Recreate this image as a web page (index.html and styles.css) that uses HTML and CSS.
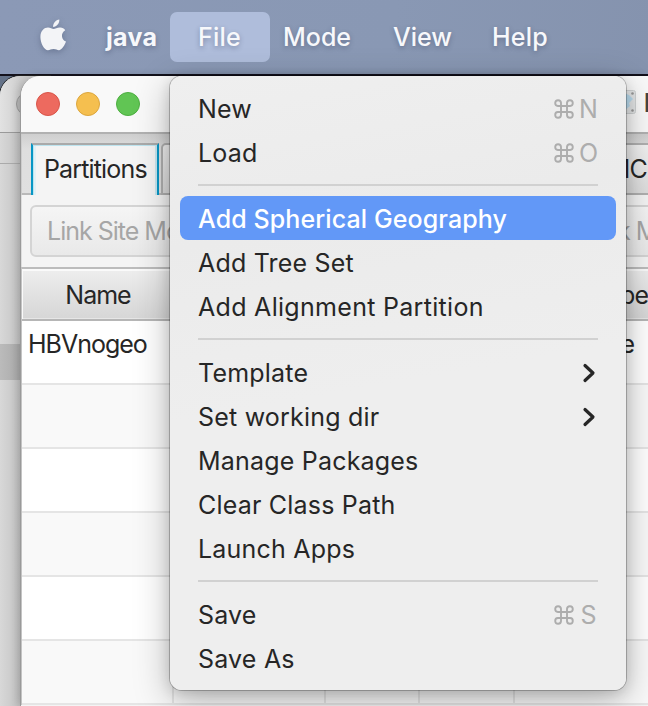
FILE: index.html
```html
<!DOCTYPE html>
<html lang="en">
<head>
<meta charset="utf-8">
<title>java</title>
<link rel="stylesheet" href="styles.css">
</head>
<body>
<svg class="defs" width="0" height="0"><defs>
  <symbol id="cmd" viewBox="0 0 20 20"><path d="M7 7H3.900A2.900 2.900 0 1 1 7 3.900V16.100A2.900 2.900 0 1 1 3.900 13H16.100A2.900 2.900 0 1 1 13 16.100V3.900A2.900 2.900 0 1 1 16.100 7Z" fill="none" stroke="currentColor" stroke-width="1.9"/></symbol>
  <symbol id="chev" viewBox="0 0 14 20"><path d="M3 2.500 11 10 3 17.500" fill="none" stroke="currentColor" stroke-width="3.2" stroke-linecap="round" stroke-linejoin="round"/></symbol>
</defs></svg>
<div class="desktop">
  <nav class="menubar">
    <svg class="apple" viewBox="0 0 26 32"><path d="M13.100 7.900C13 4.300 15.800 1 19.300.5 19.700 4.200 16.700 7.700 13.100 7.900ZM20.300 8.600C22.300 8.700 24.200 9.700 25.200 11.300 20.400 14.200 21.200 20.700 26 22.600 25 25.600 22.200 31 19.200 31.200 17 31.300 16.300 30 13.600 30 10.900 30 10 31.200 8 31.200 4.300 31.200.4 24.200.4 18 .4 11.800 4.300 8.600 8 8.600 10.400 8.600 12.100 10.100 13.600 10.100 15.100 10.100 17.400 8.400 20.300 8.600Z" fill="currentColor"/></svg>
    <span class="app">java</span>
    <span class="item file">File</span>
    <span class="item mode">Mode</span>
    <span class="item view">View</span>
    <span class="item help">Help</span>
  </nav>
  <main class="space">
    <aside class="backwin"><i class="backdot"></i><div class="backhead"></div><div class="backtabs"></div><div class="backbody"></div><div class="backrow"></div></aside>
    <section class="window">
      <header class="titlebar">
        <i class="light red"></i><i class="light yellow"></i><i class="light green"></i>
        <svg class="docicon" viewBox="0 0 24 24"><rect x=".5" y=".5" width="23" height="23" rx="2" fill="#e4e6e7" stroke="#cfd2d3"/><path d="M3 5 12 3 17 5 21 9 17 13 18 16 12 21 4 18Z" fill="#b9dbee"/><circle cx="20.500" cy="3.500" r="1.300" fill="#999"/><circle cx="20.500" cy="20.500" r="1.300" fill="#999"/></svg>
        <span class="wintitle">BEAUti</span>
      </header>
      <div class="tabs"><div class="tab active">Partitions</div><div class="tab mid"></div><div class="tab last">MCMC</div></div>
      <div class="toolbar"><div class="btn">Link Site Models</div><div class="btn right">Link Models</div></div>
      <div class="table">
        <div class="row head"><div>Name</div><div></div><div></div><div></div><div class="end">Data Type</div></div>
        <div class="row"><div>HBVnogeo</div><div></div><div></div><div></div><div class="end">nucleotide</div></div>
        <div class="row alt"><div></div><div></div><div></div><div></div><div></div></div>
        <div class="row"><div></div><div></div><div></div><div></div><div></div></div>
        <div class="row alt"><div></div><div></div><div></div><div></div><div></div></div>
        <div class="row"><div></div><div></div><div></div><div></div><div></div></div>
        <div class="row alt"><div></div><div></div><div></div><div></div><div></div></div>
      </div>
    </section>
    <div class="menu">
      <div class="mi"><span>New</span><span class="key"><svg><use href="#cmd"/></svg><b>N</b></span></div>
      <div class="mi"><span>Load</span><span class="key"><svg><use href="#cmd"/></svg><b>O</b></span></div>
      <hr>
      <div class="mi sel"><span>Add Spherical Geography</span></div>
      <div class="mi"><span>Add Tree Set</span></div>
      <div class="mi wide"><span>Add Alignment Partition</span></div>
      <hr>
      <div class="mi"><span>Template</span><svg class="chev"><use href="#chev"/></svg></div>
      <div class="mi"><span>Set working dir</span><svg class="chev"><use href="#chev"/></svg></div>
      <div class="mi"><span>Manage Packages</span></div>
      <div class="mi"><span>Clear Class Path</span></div>
      <div class="mi"><span>Launch Apps</span></div>
      <hr>
      <div class="mi"><span>Save</span><span class="key"><svg><use href="#cmd"/></svg><b>S</b></span></div>
      <div class="mi"><span>Save As</span></div>
    </div>
  </main>
</div>
</body>
</html>
```
FILE: styles.css
```css
* { box-sizing: border-box; }
body { margin: 0; font-family: Inter, "Liberation Sans", sans-serif; font-size: 25px; color: #262626; }
.defs { display: block; height: 0; }
.desktop { width: 648px; height: 706px; overflow: hidden; display: flex; flex-direction: column; background: #8997b3; }
.menubar { height: 76px; flex: none; display: flex; align-items: flex-start; padding-top: 12px; line-height: 50px; color: #f7f8fb; border-bottom: 2px solid #14121c; background: linear-gradient(100deg, #8b99b6, #8998b4 60%, #8593ae); text-shadow: 0 2px 5px rgba(50, 60, 90, .4); font-weight: 500; white-space: nowrap; }
.apple { width: 26px; height: 32px; margin: 7px 0 0 40px; filter: drop-shadow(0 2px 3px rgba(50, 60, 90, .35)); color: #f3f4f7; }
.app { width: 64px; margin-left: 40px; font-weight: 700; letter-spacing: .3px; }
.item { width: 100px; }
.file { height: 50px; border-radius: 7px; background: #afbddb; padding-left: 28px; letter-spacing: .2px; }
.mode { width: 110px; padding-left: 13px; }
.view { padding-left: 13px; }
.help { padding-left: 12px; letter-spacing: .2px; }
.space { position: relative; height: 630px; flex: none; display: flex; background: #647288; }
.backwin { position: relative; width: 50px; margin-right: -30px; flex: none; border-radius: 20px 0 0 0; overflow: hidden; display: grid; grid-template-rows: 57px 31px 180px 36px 1fr; grid-template-areas: "head" "tabs" "body" "sel" "rest"; background: linear-gradient(90deg, #d8d8d8, #c3c3c3 20px); box-shadow: 0 0 0 1px #222; }
.backhead { grid-area: head; background: linear-gradient(90deg, #e2e2e2, #cfcfcf 20px); border-bottom: 1px solid #999; }
.backtabs { grid-area: tabs; border-bottom: 1px solid #aaa; }
.backbody { grid-area: body; }
.backrow { grid-area: sel; background: linear-gradient(90deg, #bbb, #aaa 20px); }
.backdot { position: absolute; left: 16px; top: 16px; width: 24px; height: 24px; border: 1px solid #999; border-radius: 50%; background: #bbb; }
.window { position: relative; width: 628px; flex: none; border-left: 1px solid #9a9a9a; border-radius: 20px 0 0 0; background: #f4f4f4; overflow: hidden; box-shadow: -2px 0 9px rgba(0, 0, 0, .18); letter-spacing: -1px; }
.titlebar { height: 58px; display: flex; align-items: center; padding: 0 0 0 15px; background: #f9f9f9; border-bottom: 2px solid #b1b1b1; }
.light { flex: none; width: 24px; height: 24px; border-radius: 50%; margin-right: 16px; border: 1px solid; }
.red { background: #ed6a5f; border-color: #d85549; }
.yellow { background: #f5bf4f; border-color: #dba63e; }
.green { background: #61c554; border-color: #4dae40; }
.docicon { width: 24px; height: 24px; flex: none; margin: -4px 8px 0 456px; }
.wintitle { font-weight: 700; padding-bottom: 3px; color: #444; }
.tabs { height: 61px; display: flex; align-items: flex-end; padding-left: 9px; border-left: 1px solid #ccc; background: linear-gradient(#cfcfcf, #dedede 15px, #e0e0e0); box-shadow: inset 0 -2px #b9b9b9; }
.tab { flex: none; height: 52px; line-height: 48px; border: 2px solid #b0b0b0; background: linear-gradient(#f2f2f2, #ddd); }
.active { width: 128px; padding-left: 11px; background: #f4f4f4; border-color: #aaa #0796c5 transparent #0796c5; border-bottom: 0; box-shadow: inset 1px 1px #bde4ef, inset -2px 0 #c5e5ef, inset 3px 0 #e1f1f6; letter-spacing: -.85px; }
.mid { width: 399px; margin-left: 2px; border-radius: 5px 0 0 0; }
.last { width: 120px; padding-left: 9px; margin-left: -2px; }
.toolbar { height: 72px; display: flex; gap: 10px; padding: 10px 0 0 8px; border-left: 1px solid #ddd; }
.btn { width: 480px; height: 52px; flex: none; line-height: 49px; padding-left: 15px; border: 2px solid #d4d4d4; border-radius: 6px; background: linear-gradient(#f5f5f5, #e9e9e9); color: #a6a6a6; white-space: nowrap; }
.right { padding-left: 63px; }
.table { border-left: 1px solid #c4c4c4; border-top: 2px solid #bcbcbc; }
.row { display: grid; grid-template-columns: 152px 152px 94px 95px 1fr; height: 64px; background: #fff; border-bottom: 2px solid #e5e5e5; }
.row > div { border-right: 2px solid #e5e5e5; padding: 7px 0 0 6px; line-height: 32px; }
.row > div:last-child { border-right: 0; }
.row.alt { background: #f9f9f9; }
.row.head { height: 52px; background: linear-gradient(#eee, #d6d6d6); border-bottom-color: #b6b6b6; box-shadow: inset 1px 2px #fafafa, inset 0 -1px #e6e6e6; }
.row.head > div { text-align: center; padding: 10px 0 0 2px; border-color: #bbb; }
.row > .end { display: flex; justify-content: flex-end; padding-left: 0; padding-right: 14px; white-space: nowrap; }
.row.head > .end { padding-right: 0; }
.menu { position: absolute; left: 170px; top: 0; width: 456px; height: 614px; padding: 10px; border-radius: 12px; background: linear-gradient(170deg, #efefef, #ebebeb 25%, #eee 50%); box-shadow: 0 0 0 1px rgba(0, 0, 0, .23), 0 10px 36px rgba(0, 0, 0, .28), 0 3px 14px rgba(0, 0, 0, .14); letter-spacing: .2px; }
.mi { height: 44px; display: flex; justify-content: space-between; align-items: center; padding: 2px 18px 0; white-space: nowrap; border-radius: 8px; }
.sel { background: #6298f7; color: #fff; font-weight: 500; letter-spacing: .1px; }
.wide { letter-spacing: .3px; }
hr { height: 2px; margin: 10px 18px; border: 0; background: #d1d1d1; }
.key { display: flex; align-items: center; color: #adadad; }
.key svg { width: 20px; height: 20px; margin-right: 5px; }
.key b { width: 19px; text-align: center; font-weight: 400; }
.mi .chev { width: 14px; height: 20px; margin-right: 2px; }
```
